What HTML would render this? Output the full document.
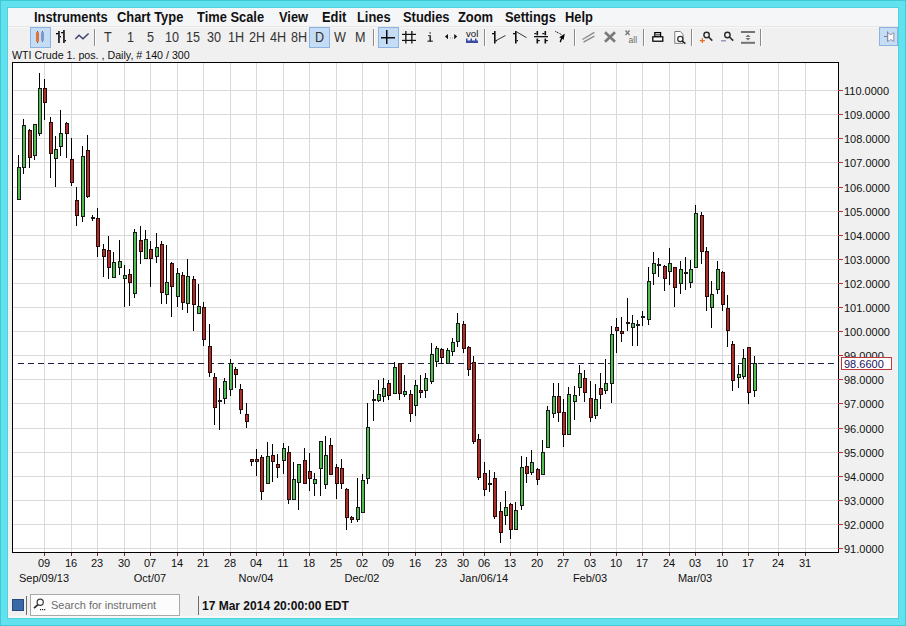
<!DOCTYPE html><html><head><meta charset="utf-8"><style>
*{margin:0;padding:0;box-sizing:border-box}
html,body{width:906px;height:626px;overflow:hidden;background:#62e2ee;font-family:"Liberation Sans",sans-serif}
.a{position:absolute}
.win{position:absolute;left:8px;top:8px;width:890px;height:610px;background:#f0f0f0}
.m{position:absolute;top:9px;font:bold 14px "Liberation Sans",sans-serif;color:#111;white-space:nowrap;transform:scaleX(0.92);transform-origin:0 0}
.tb{position:absolute;top:29px;font:14px "Liberation Sans",sans-serif;color:#333;white-space:nowrap;transform:scaleX(0.9);transform-origin:0 0}
.sel{position:absolute;background:#c5dcf5;border:1px solid #8db3e2}
.sep{position:absolute;width:1px;top:29px;height:17px;background:#8a8a8a;box-shadow:1px 0 0 #fff}
.pl{position:absolute;left:844px;font:11px "Liberation Sans",sans-serif;color:#111;white-space:nowrap}
.dl{position:absolute;top:557px;font:11px "Liberation Sans",sans-serif;color:#111;white-space:nowrap;width:30px;text-align:center}
.ml{position:absolute;top:572px;font:11px "Liberation Sans",sans-serif;color:#111;white-space:nowrap}
</style></head><body>

<div class="a" style="left:0;top:0;width:906px;height:626px;border:1px solid #3fc9d6"></div>
<div class="a" style="left:7px;top:7px;width:892px;height:612px;border:1px solid #4fd2de"></div>
<div class="win"></div>
<div class="a" style="left:8px;top:8px;width:890px;height:18px;background:#f5f6f8"></div>
<div class="a" style="left:8px;top:26px;width:890px;height:1px;background:#e8e8e8"></div>
<div class="a" style="left:8px;top:27px;width:890px;height:1px;background:#f7f7f7"></div>
<div class="m" style="left:33.5px">Instruments</div>
<div class="m" style="left:117px">Chart Type</div>
<div class="m" style="left:196.5px">Time Scale</div>
<div class="m" style="left:279px">View</div>
<div class="m" style="left:321.5px">Edit</div>
<div class="m" style="left:357px">Lines</div>
<div class="m" style="left:402.5px">Studies</div>
<div class="m" style="left:458px">Zoom</div>
<div class="m" style="left:504.5px">Settings</div>
<div class="m" style="left:564.5px">Help</div>
<div class="sel" style="left:30px;top:27px;width:21px;height:21px"></div>
<div class="sel" style="left:309px;top:27px;width:21px;height:21px"></div>
<div class="sel" style="left:378px;top:27px;width:21px;height:21px"></div>
<div class="sel" style="left:879px;top:27px;width:19px;height:19px"></div>
<div class="sep" style="left:94px"></div>
<div class="sep" style="left:373px"></div>
<div class="sep" style="left:484px"></div>
<div class="sep" style="left:574px"></div>
<div class="sep" style="left:643px"></div>
<div class="sep" style="left:691px"></div>
<div class="sep" style="left:760px"></div>
<div class="tb" style="left:104px">T</div>
<div class="tb" style="left:126.5px">1</div>
<div class="tb" style="left:146.5px">5</div>
<div class="tb" style="left:164.5px">10</div>
<div class="tb" style="left:185.5px">15</div>
<div class="tb" style="left:206.5px">30</div>
<div class="tb" style="left:228px">1H</div>
<div class="tb" style="left:248.5px">2H</div>
<div class="tb" style="left:269.5px">4H</div>
<div class="tb" style="left:290.5px">8H</div>
<div class="tb" style="left:315px">D</div>
<div class="tb" style="left:334px">W</div>
<div class="tb" style="left:355px">M</div>
<svg class="a" style="left:0;top:0" width="906" height="60">
<rect x="37" y="31" width="1" height="12" fill="#8a4a20"/><rect x="36" y="32" width="3" height="10" rx="1" fill="#e07436"/>
<rect x="42" y="31" width="1" height="11" fill="#4a6aa0"/><rect x="41" y="32" width="3" height="9" rx="1" fill="#7b9ad0"/>
<g fill="#000"><rect x="58.2" y="31" width="1.5" height="12"/><rect x="56" y="33" width="2.2" height="1.3"/><rect x="59.7" y="36" width="1.3" height="1.3"/><rect x="63.2" y="30" width="1.5" height="13"/><rect x="61.2" y="32" width="2" height="1.3"/><rect x="64.7" y="40" width="1.3" height="1.3"/></g>
<polyline points="75.3,39 79,35.3 83,38.8 88.6,33.4" fill="none" stroke="#3a3e6a" stroke-width="1.4"/>
<rect x="381" y="37" width="14" height="1.5" fill="#111"/><rect x="386" y="30" width="1.5" height="14" fill="#111"/>
<g fill="#111"><rect x="405.2" y="31" width="1.3" height="12.5"/><rect x="411.2" y="31" width="1.3" height="12.5"/><rect x="402" y="33.8" width="14" height="1.2"/><rect x="402" y="39.8" width="14" height="1.2"/></g>
<g fill="#1a1a1a"><rect x="429.4" y="32.2" width="1.5" height="1.5" fill="#555"/><rect x="429.5" y="35.2" width="1.4" height="6.2"/><rect x="428" y="35.2" width="1.5" height="1"/><rect x="427.5" y="40.6" width="5.3" height="1.1"/></g>
<path d="M445,36.5 L448,34 L448,39.2 Z M457.2,36.5 L454.2,34 L454.2,39.2 Z" fill="#111"/><rect x="450" y="37.5" width="1" height="1" fill="#999"/><rect x="452" y="37.5" width="1" height="1" fill="#999"/>
<text x="466" y="36.9" font-family="Liberation Sans" font-size="9" fill="#111" textLength="12.3" lengthAdjust="spacingAndGlyphs">vol</text>
<path d="M466,38.5 h1.5 v2 h3 v-2 h1.5 v2 h3 v-2 h1.5 v2 h1.5 v2.5 h-12 z" fill="#3b4ba3"/>
<g fill="#111"><rect x="494" y="31" width="1.6" height="12.5"/><rect x="492" y="33" width="2" height="1.3"/><rect x="495.5" y="40" width="1.5" height="1.3"/><rect x="515" y="31" width="1.6" height="12.5"/><rect x="513" y="33" width="2" height="1.3"/><rect x="516.5" y="40" width="1.5" height="1.3"/></g>
<line x1="496.5" y1="40.3" x2="505.5" y2="35.5" stroke="#333" stroke-width="1"/><line x1="516.5" y1="31.8" x2="526.6" y2="37.7" stroke="#333" stroke-width="1"/>
<g fill="#111"><rect x="534" y="36" width="14" height="1.3"/><rect x="536.5" y="31" width="1.6" height="4.3"/><rect x="544.5" y="31" width="1.6" height="4.3"/><rect x="536.5" y="38.5" width="1.6" height="5"/><rect x="544.5" y="38.5" width="1.6" height="5"/><rect x="534.3" y="33" width="2.2" height="1.2"/><rect x="542.3" y="33" width="2.2" height="1.2"/><rect x="538" y="40" width="1.8" height="1.2"/><rect x="546" y="40" width="1.8" height="1.2"/></g>
<line x1="555.3" y1="31.3" x2="562" y2="34.8" stroke="#222" stroke-width="1" stroke-dasharray="1.2 0.6"/><path d="M564.8,33.8 L563.5,40 L562.2,38.8 L560.8,42.5 L559.6,41.8 L561,38 L559.2,37.2 Z" fill="#000"/>
<g stroke="#8a8a8a" stroke-width="1.4" fill="none"><line x1="582.4" y1="39.5" x2="594.4" y2="32.4"/><line x1="583.5" y1="42.1" x2="594.4" y2="36.2"/></g>
<g stroke="#7a7a7a" stroke-width="2.6"><line x1="605" y1="32.2" x2="615" y2="41.8"/><line x1="615" y1="32.2" x2="605" y2="41.8"/></g>
<g stroke="#777" stroke-width="1.3"><line x1="625.5" y1="30.5" x2="629.5" y2="35"/><line x1="629.5" y1="30.5" x2="625.5" y2="35"/></g>
<text x="628.6" y="42.6" font-family="Liberation Sans" font-size="9" fill="#6a6a6a" textLength="8.6" lengthAdjust="spacingAndGlyphs">all</text>
<g fill="#fff" stroke="#000" stroke-width="1.25"><rect x="654.8" y="32.6" width="5.8" height="4.4"/><rect x="652.8" y="36.8" width="10" height="4.4"/></g><rect x="655.4" y="34.4" width="4.6" height="1" fill="#111"/><rect x="654" y="38.2" width="7.6" height="1.4" fill="#fff"/>
<path d="M674.8,31.5 h5.6 l2.6,2.8 v9 h-8.2 z" fill="#fff" stroke="#7a7a7a" stroke-width="1"/><circle cx="680.3" cy="39" r="2.6" fill="#fff" stroke="#333" stroke-width="1.3"/><line x1="682.2" y1="41" x2="685.4" y2="43.6" stroke="#222" stroke-width="1.5"/>
<circle cx="706.6" cy="35" r="2.7" fill="none" stroke="#2a2a2a" stroke-width="1.4"/><line x1="708.6" y1="37" x2="712.3" y2="40.6" stroke="#2a2a2a" stroke-width="1.6"/>
<g fill="#e0702a"><rect x="699.8" y="40" width="5" height="1.3"/><rect x="701.7" y="38" width="1.3" height="5"/></g>
<circle cx="727.4" cy="35" r="2.7" fill="none" stroke="#2a2a2a" stroke-width="1.4"/><line x1="729.4" y1="37" x2="733.2" y2="40.6" stroke="#2a2a2a" stroke-width="1.6"/>
<rect x="721" y="40.2" width="5" height="1.2" fill="#7d86b4"/>
<g fill="#737373"><rect x="741" y="31" width="14" height="2"/><rect x="741" y="41.8" width="14" height="2"/><path d="M748,34.5 L750.6,37 L745.4,37 Z M748,40.5 L750.6,38 L745.4,38 Z"/></g>
<rect x="884" y="36" width="3.5" height="1" fill="#6a7a9a"/><rect x="887" y="31.5" width="1" height="10" fill="#6a7a9a"/><path d="M887.8,32.8 L890.8,34.8 L893.8,32.8 L893.8,41.5 L890.8,39.5 L887.8,41.5 Z" fill="#fff" stroke="#8a8a9a" stroke-width="0.9"/>
</svg>
<div class="a" style="left:12px;top:49px;font:11px 'Liberation Sans',sans-serif;color:#111;white-space:nowrap;transform:scaleX(0.97);transform-origin:0 0">WTI Crude 1. pos. , Daily, # 140 / 300</div>
<div class="a" style="left:12px;top:62px;width:827px;height:491px;background:#fff;border:1px solid #000"></div>
<svg class="a" style="left:0;top:0" width="906" height="626" shape-rendering="crispEdges">
<rect x="13" y="548" width="825" height="1" fill="#dadada"/>
<rect x="838" y="548" width="5" height="1" fill="#b83535"/>
<rect x="13" y="524" width="825" height="1" fill="#dadada"/>
<rect x="838" y="524" width="5" height="1" fill="#b83535"/>
<rect x="13" y="500" width="825" height="1" fill="#dadada"/>
<rect x="838" y="500" width="5" height="1" fill="#b83535"/>
<rect x="13" y="476" width="825" height="1" fill="#dadada"/>
<rect x="838" y="476" width="5" height="1" fill="#b83535"/>
<rect x="13" y="452" width="825" height="1" fill="#dadada"/>
<rect x="838" y="452" width="5" height="1" fill="#b83535"/>
<rect x="13" y="428" width="825" height="1" fill="#dadada"/>
<rect x="838" y="428" width="5" height="1" fill="#b83535"/>
<rect x="13" y="403" width="825" height="1" fill="#dadada"/>
<rect x="838" y="403" width="5" height="1" fill="#b83535"/>
<rect x="13" y="379" width="825" height="1" fill="#dadada"/>
<rect x="838" y="379" width="5" height="1" fill="#b83535"/>
<rect x="13" y="355" width="825" height="1" fill="#dadada"/>
<rect x="838" y="355" width="5" height="1" fill="#b83535"/>
<rect x="13" y="331" width="825" height="1" fill="#dadada"/>
<rect x="838" y="331" width="5" height="1" fill="#b83535"/>
<rect x="13" y="307" width="825" height="1" fill="#dadada"/>
<rect x="838" y="307" width="5" height="1" fill="#b83535"/>
<rect x="13" y="283" width="825" height="1" fill="#dadada"/>
<rect x="838" y="283" width="5" height="1" fill="#b83535"/>
<rect x="13" y="259" width="825" height="1" fill="#dadada"/>
<rect x="838" y="259" width="5" height="1" fill="#b83535"/>
<rect x="13" y="235" width="825" height="1" fill="#dadada"/>
<rect x="838" y="235" width="5" height="1" fill="#b83535"/>
<rect x="13" y="211" width="825" height="1" fill="#dadada"/>
<rect x="838" y="211" width="5" height="1" fill="#b83535"/>
<rect x="13" y="187" width="825" height="1" fill="#dadada"/>
<rect x="838" y="187" width="5" height="1" fill="#b83535"/>
<rect x="13" y="162" width="825" height="1" fill="#dadada"/>
<rect x="838" y="162" width="5" height="1" fill="#b83535"/>
<rect x="13" y="138" width="825" height="1" fill="#dadada"/>
<rect x="838" y="138" width="5" height="1" fill="#b83535"/>
<rect x="13" y="114" width="825" height="1" fill="#dadada"/>
<rect x="838" y="114" width="5" height="1" fill="#b83535"/>
<rect x="13" y="90" width="825" height="1" fill="#dadada"/>
<rect x="838" y="90" width="5" height="1" fill="#b83535"/>
<rect x="44" y="63" width="1" height="489" fill="#dadada"/>
<rect x="44" y="553" width="1" height="3" fill="#6a3030"/>
<rect x="71" y="63" width="1" height="489" fill="#dadada"/>
<rect x="71" y="553" width="1" height="3" fill="#6a3030"/>
<rect x="97" y="63" width="1" height="489" fill="#dadada"/>
<rect x="97" y="553" width="1" height="3" fill="#6a3030"/>
<rect x="124" y="63" width="1" height="489" fill="#dadada"/>
<rect x="124" y="553" width="1" height="3" fill="#6a3030"/>
<rect x="150" y="63" width="1" height="489" fill="#dadada"/>
<rect x="150" y="553" width="1" height="3" fill="#6a3030"/>
<rect x="177" y="63" width="1" height="489" fill="#dadada"/>
<rect x="177" y="553" width="1" height="3" fill="#6a3030"/>
<rect x="203" y="63" width="1" height="489" fill="#dadada"/>
<rect x="203" y="553" width="1" height="3" fill="#6a3030"/>
<rect x="230" y="63" width="1" height="489" fill="#dadada"/>
<rect x="230" y="553" width="1" height="3" fill="#6a3030"/>
<rect x="256" y="63" width="1" height="489" fill="#dadada"/>
<rect x="256" y="553" width="1" height="3" fill="#6a3030"/>
<rect x="283" y="63" width="1" height="489" fill="#dadada"/>
<rect x="283" y="553" width="1" height="3" fill="#6a3030"/>
<rect x="309" y="63" width="1" height="489" fill="#dadada"/>
<rect x="309" y="553" width="1" height="3" fill="#6a3030"/>
<rect x="336" y="63" width="1" height="489" fill="#dadada"/>
<rect x="336" y="553" width="1" height="3" fill="#6a3030"/>
<rect x="362" y="63" width="1" height="489" fill="#dadada"/>
<rect x="362" y="553" width="1" height="3" fill="#6a3030"/>
<rect x="388" y="63" width="1" height="489" fill="#dadada"/>
<rect x="388" y="553" width="1" height="3" fill="#6a3030"/>
<rect x="415" y="63" width="1" height="489" fill="#dadada"/>
<rect x="415" y="553" width="1" height="3" fill="#6a3030"/>
<rect x="441" y="63" width="1" height="489" fill="#dadada"/>
<rect x="441" y="553" width="1" height="3" fill="#6a3030"/>
<rect x="463" y="63" width="1" height="489" fill="#dadada"/>
<rect x="463" y="553" width="1" height="3" fill="#6a3030"/>
<rect x="484" y="63" width="1" height="489" fill="#dadada"/>
<rect x="484" y="553" width="1" height="3" fill="#6a3030"/>
<rect x="510" y="63" width="1" height="489" fill="#dadada"/>
<rect x="510" y="553" width="1" height="3" fill="#6a3030"/>
<rect x="537" y="63" width="1" height="489" fill="#dadada"/>
<rect x="537" y="553" width="1" height="3" fill="#6a3030"/>
<rect x="563" y="63" width="1" height="489" fill="#dadada"/>
<rect x="563" y="553" width="1" height="3" fill="#6a3030"/>
<rect x="590" y="63" width="1" height="489" fill="#dadada"/>
<rect x="590" y="553" width="1" height="3" fill="#6a3030"/>
<rect x="616" y="63" width="1" height="489" fill="#dadada"/>
<rect x="616" y="553" width="1" height="3" fill="#6a3030"/>
<rect x="642" y="63" width="1" height="489" fill="#dadada"/>
<rect x="642" y="553" width="1" height="3" fill="#6a3030"/>
<rect x="669" y="63" width="1" height="489" fill="#dadada"/>
<rect x="669" y="553" width="1" height="3" fill="#6a3030"/>
<rect x="695" y="63" width="1" height="489" fill="#dadada"/>
<rect x="695" y="553" width="1" height="3" fill="#6a3030"/>
<rect x="722" y="63" width="1" height="489" fill="#dadada"/>
<rect x="722" y="553" width="1" height="3" fill="#6a3030"/>
<rect x="748" y="63" width="1" height="489" fill="#dadada"/>
<rect x="748" y="553" width="1" height="3" fill="#6a3030"/>
<rect x="778" y="63" width="1" height="489" fill="#dadada"/>
<rect x="778" y="553" width="1" height="3" fill="#6a3030"/>
<rect x="805" y="63" width="1" height="489" fill="#dadada"/>
<rect x="805" y="553" width="1" height="3" fill="#6a3030"/>
<line x1="18" y1="363.5" x2="838" y2="363.5" stroke="#1c1c48" stroke-width="1" stroke-dasharray="6 4"/>
<rect x="18" y="155" width="1" height="45" fill="#000"/>
<rect x="17" y="167" width="4" height="33" fill="#1a1a1a"/>
<rect x="18" y="168" width="2" height="31" fill="#4fbd4f"/>
<rect x="23" y="119" width="1" height="55" fill="#000"/>
<rect x="22" y="125" width="4" height="43" fill="#1a1a1a"/>
<rect x="23" y="126" width="2" height="41" fill="#4fbd4f"/>
<rect x="29" y="129" width="1" height="39" fill="#000"/>
<rect x="28" y="130" width="4" height="28" fill="#2a0a0a"/>
<rect x="29" y="131" width="2" height="26" fill="#a8302a"/>
<rect x="34" y="124" width="1" height="36" fill="#000"/>
<rect x="33" y="124" width="4" height="32" fill="#1a1a1a"/>
<rect x="34" y="125" width="2" height="30" fill="#4fbd4f"/>
<rect x="39" y="73" width="1" height="63" fill="#000"/>
<rect x="38" y="88" width="4" height="46" fill="#1a1a1a"/>
<rect x="39" y="89" width="2" height="44" fill="#4fbd4f"/>
<rect x="44" y="79" width="1" height="41" fill="#000"/>
<rect x="43" y="88" width="4" height="15" fill="#2a0a0a"/>
<rect x="44" y="89" width="2" height="13" fill="#a8302a"/>
<rect x="50" y="117" width="1" height="61" fill="#000"/>
<rect x="49" y="122" width="4" height="32" fill="#2a0a0a"/>
<rect x="50" y="123" width="2" height="30" fill="#a8302a"/>
<rect x="55" y="136" width="1" height="51" fill="#000"/>
<rect x="54" y="149" width="4" height="10" fill="#1a1a1a"/>
<rect x="55" y="150" width="2" height="8" fill="#4fbd4f"/>
<rect x="60" y="110" width="1" height="46" fill="#000"/>
<rect x="59" y="133" width="4" height="14" fill="#1a1a1a"/>
<rect x="60" y="134" width="2" height="12" fill="#4fbd4f"/>
<rect x="66" y="122" width="1" height="36" fill="#000"/>
<rect x="65" y="123" width="4" height="11" fill="#2a0a0a"/>
<rect x="66" y="124" width="2" height="9" fill="#a8302a"/>
<rect x="71" y="138" width="1" height="48" fill="#000"/>
<rect x="70" y="159" width="4" height="24" fill="#2a0a0a"/>
<rect x="71" y="160" width="2" height="22" fill="#a8302a"/>
<rect x="76" y="187" width="1" height="39" fill="#000"/>
<rect x="75" y="200" width="4" height="16" fill="#2a0a0a"/>
<rect x="76" y="201" width="2" height="14" fill="#a8302a"/>
<rect x="82" y="146" width="1" height="76" fill="#000"/>
<rect x="81" y="156" width="4" height="61" fill="#1a1a1a"/>
<rect x="82" y="157" width="2" height="59" fill="#4fbd4f"/>
<rect x="87" y="135" width="1" height="63" fill="#000"/>
<rect x="86" y="150" width="4" height="47" fill="#2a0a0a"/>
<rect x="87" y="151" width="2" height="45" fill="#a8302a"/>
<rect x="92" y="215" width="1" height="6" fill="#000"/>
<rect x="91" y="217" width="4" height="2" fill="#1a1a1a"/>
<rect x="97" y="208" width="1" height="49" fill="#000"/>
<rect x="96" y="218" width="4" height="29" fill="#2a0a0a"/>
<rect x="97" y="219" width="2" height="27" fill="#a8302a"/>
<rect x="103" y="244" width="1" height="33" fill="#000"/>
<rect x="102" y="249" width="4" height="8" fill="#2a0a0a"/>
<rect x="103" y="250" width="2" height="6" fill="#a8302a"/>
<rect x="108" y="236" width="1" height="43" fill="#000"/>
<rect x="107" y="250" width="4" height="18" fill="#2a0a0a"/>
<rect x="108" y="251" width="2" height="16" fill="#a8302a"/>
<rect x="113" y="252" width="1" height="26" fill="#000"/>
<rect x="112" y="262" width="4" height="16" fill="#1a1a1a"/>
<rect x="113" y="263" width="2" height="14" fill="#4fbd4f"/>
<rect x="119" y="240" width="1" height="35" fill="#000"/>
<rect x="118" y="261" width="4" height="7" fill="#1a1a1a"/>
<rect x="119" y="262" width="2" height="5" fill="#4fbd4f"/>
<rect x="124" y="265" width="1" height="42" fill="#000"/>
<rect x="123" y="275" width="4" height="4" fill="#1a1a1a"/>
<rect x="124" y="276" width="2" height="2" fill="#4fbd4f"/>
<rect x="129" y="269" width="1" height="37" fill="#000"/>
<rect x="128" y="274" width="4" height="9" fill="#2a0a0a"/>
<rect x="129" y="275" width="2" height="7" fill="#a8302a"/>
<rect x="134" y="229" width="1" height="69" fill="#000"/>
<rect x="133" y="232" width="4" height="62" fill="#1a1a1a"/>
<rect x="134" y="233" width="2" height="60" fill="#4fbd4f"/>
<rect x="140" y="226" width="1" height="38" fill="#000"/>
<rect x="139" y="240" width="4" height="12" fill="#2a0a0a"/>
<rect x="140" y="241" width="2" height="10" fill="#a8302a"/>
<rect x="145" y="230" width="1" height="29" fill="#000"/>
<rect x="144" y="239" width="4" height="20" fill="#1a1a1a"/>
<rect x="145" y="240" width="2" height="18" fill="#4fbd4f"/>
<rect x="150" y="241" width="1" height="46" fill="#000"/>
<rect x="149" y="249" width="4" height="10" fill="#2a0a0a"/>
<rect x="150" y="250" width="2" height="8" fill="#a8302a"/>
<rect x="156" y="233" width="1" height="30" fill="#000"/>
<rect x="155" y="247" width="4" height="10" fill="#1a1a1a"/>
<rect x="156" y="248" width="2" height="8" fill="#4fbd4f"/>
<rect x="161" y="241" width="1" height="63" fill="#000"/>
<rect x="160" y="244" width="4" height="49" fill="#2a0a0a"/>
<rect x="161" y="245" width="2" height="47" fill="#a8302a"/>
<rect x="166" y="245" width="1" height="59" fill="#000"/>
<rect x="165" y="282" width="4" height="13" fill="#1a1a1a"/>
<rect x="166" y="283" width="2" height="11" fill="#4fbd4f"/>
<rect x="171" y="262" width="1" height="55" fill="#000"/>
<rect x="170" y="263" width="4" height="24" fill="#2a0a0a"/>
<rect x="171" y="264" width="2" height="22" fill="#a8302a"/>
<rect x="177" y="268" width="1" height="39" fill="#000"/>
<rect x="176" y="273" width="4" height="24" fill="#1a1a1a"/>
<rect x="177" y="274" width="2" height="22" fill="#4fbd4f"/>
<rect x="182" y="272" width="1" height="38" fill="#000"/>
<rect x="181" y="275" width="4" height="28" fill="#2a0a0a"/>
<rect x="182" y="276" width="2" height="26" fill="#a8302a"/>
<rect x="187" y="259" width="1" height="54" fill="#000"/>
<rect x="186" y="276" width="4" height="28" fill="#1a1a1a"/>
<rect x="187" y="277" width="2" height="26" fill="#4fbd4f"/>
<rect x="193" y="276" width="1" height="55" fill="#000"/>
<rect x="192" y="279" width="4" height="26" fill="#2a0a0a"/>
<rect x="193" y="280" width="2" height="24" fill="#a8302a"/>
<rect x="198" y="284" width="1" height="30" fill="#000"/>
<rect x="197" y="306" width="4" height="8" fill="#1a1a1a"/>
<rect x="198" y="307" width="2" height="6" fill="#4fbd4f"/>
<rect x="203" y="302" width="1" height="44" fill="#000"/>
<rect x="202" y="307" width="4" height="33" fill="#2a0a0a"/>
<rect x="203" y="308" width="2" height="31" fill="#a8302a"/>
<rect x="209" y="324" width="1" height="53" fill="#000"/>
<rect x="208" y="346" width="4" height="27" fill="#2a0a0a"/>
<rect x="209" y="347" width="2" height="25" fill="#a8302a"/>
<rect x="214" y="373" width="1" height="52" fill="#000"/>
<rect x="213" y="377" width="4" height="31" fill="#2a0a0a"/>
<rect x="214" y="378" width="2" height="29" fill="#a8302a"/>
<rect x="219" y="388" width="1" height="42" fill="#000"/>
<rect x="218" y="400" width="4" height="2" fill="#1a1a1a"/>
<rect x="224" y="378" width="1" height="26" fill="#000"/>
<rect x="223" y="381" width="4" height="18" fill="#1a1a1a"/>
<rect x="224" y="382" width="2" height="16" fill="#4fbd4f"/>
<rect x="230" y="359" width="1" height="37" fill="#000"/>
<rect x="229" y="363" width="4" height="27" fill="#1a1a1a"/>
<rect x="230" y="364" width="2" height="25" fill="#4fbd4f"/>
<rect x="235" y="367" width="1" height="21" fill="#000"/>
<rect x="234" y="369" width="4" height="6" fill="#2a0a0a"/>
<rect x="235" y="370" width="2" height="4" fill="#a8302a"/>
<rect x="240" y="384" width="1" height="30" fill="#000"/>
<rect x="239" y="389" width="4" height="21" fill="#2a0a0a"/>
<rect x="240" y="390" width="2" height="19" fill="#a8302a"/>
<rect x="246" y="403" width="1" height="25" fill="#000"/>
<rect x="245" y="414" width="4" height="8" fill="#2a0a0a"/>
<rect x="246" y="415" width="2" height="6" fill="#a8302a"/>
<rect x="251" y="459" width="1" height="7" fill="#000"/>
<rect x="250" y="459" width="4" height="3" fill="#2a0a0a"/>
<rect x="251" y="460" width="2" height="1" fill="#a8302a"/>
<rect x="256" y="449" width="1" height="27" fill="#000"/>
<rect x="255" y="459" width="4" height="3" fill="#1a1a1a"/>
<rect x="256" y="460" width="2" height="1" fill="#a8302a"/>
<rect x="261" y="455" width="1" height="45" fill="#000"/>
<rect x="260" y="457" width="4" height="35" fill="#2a0a0a"/>
<rect x="261" y="458" width="2" height="33" fill="#a8302a"/>
<rect x="267" y="442" width="1" height="42" fill="#000"/>
<rect x="266" y="456" width="4" height="28" fill="#1a1a1a"/>
<rect x="267" y="457" width="2" height="26" fill="#4fbd4f"/>
<rect x="272" y="444" width="1" height="38" fill="#000"/>
<rect x="271" y="455" width="4" height="7" fill="#2a0a0a"/>
<rect x="272" y="456" width="2" height="5" fill="#a8302a"/>
<rect x="277" y="454" width="1" height="24" fill="#000"/>
<rect x="276" y="464" width="4" height="4" fill="#2a0a0a"/>
<rect x="277" y="465" width="2" height="2" fill="#a8302a"/>
<rect x="283" y="443" width="1" height="31" fill="#000"/>
<rect x="282" y="448" width="4" height="13" fill="#1a1a1a"/>
<rect x="283" y="449" width="2" height="11" fill="#4fbd4f"/>
<rect x="288" y="446" width="1" height="58" fill="#000"/>
<rect x="287" y="452" width="4" height="48" fill="#2a0a0a"/>
<rect x="288" y="453" width="2" height="46" fill="#a8302a"/>
<rect x="293" y="462" width="1" height="38" fill="#000"/>
<rect x="292" y="479" width="4" height="21" fill="#1a1a1a"/>
<rect x="293" y="480" width="2" height="19" fill="#4fbd4f"/>
<rect x="298" y="464" width="1" height="46" fill="#000"/>
<rect x="297" y="464" width="4" height="19" fill="#1a1a1a"/>
<rect x="298" y="465" width="2" height="17" fill="#4fbd4f"/>
<rect x="304" y="448" width="1" height="36" fill="#000"/>
<rect x="303" y="460" width="4" height="24" fill="#2a0a0a"/>
<rect x="304" y="461" width="2" height="22" fill="#a8302a"/>
<rect x="309" y="453" width="1" height="38" fill="#000"/>
<rect x="308" y="471" width="4" height="8" fill="#2a0a0a"/>
<rect x="309" y="472" width="2" height="6" fill="#a8302a"/>
<rect x="314" y="473" width="1" height="23" fill="#000"/>
<rect x="313" y="479" width="4" height="5" fill="#1a1a1a"/>
<rect x="314" y="480" width="2" height="3" fill="#4fbd4f"/>
<rect x="320" y="441" width="1" height="55" fill="#000"/>
<rect x="319" y="441" width="4" height="28" fill="#1a1a1a"/>
<rect x="320" y="442" width="2" height="26" fill="#4fbd4f"/>
<rect x="325" y="436" width="1" height="53" fill="#000"/>
<rect x="324" y="455" width="4" height="30" fill="#1a1a1a"/>
<rect x="325" y="456" width="2" height="28" fill="#4fbd4f"/>
<rect x="330" y="438" width="1" height="37" fill="#000"/>
<rect x="329" y="445" width="4" height="30" fill="#2a0a0a"/>
<rect x="330" y="446" width="2" height="28" fill="#a8302a"/>
<rect x="336" y="464" width="1" height="35" fill="#000"/>
<rect x="335" y="467" width="4" height="17" fill="#2a0a0a"/>
<rect x="336" y="468" width="2" height="15" fill="#a8302a"/>
<rect x="341" y="459" width="1" height="30" fill="#000"/>
<rect x="340" y="468" width="4" height="16" fill="#2a0a0a"/>
<rect x="341" y="469" width="2" height="14" fill="#a8302a"/>
<rect x="346" y="488" width="1" height="42" fill="#000"/>
<rect x="345" y="489" width="4" height="29" fill="#2a0a0a"/>
<rect x="346" y="490" width="2" height="27" fill="#a8302a"/>
<rect x="351" y="516" width="1" height="7" fill="#000"/>
<rect x="350" y="517" width="4" height="3" fill="#2a0a0a"/>
<rect x="351" y="518" width="2" height="1" fill="#a8302a"/>
<rect x="357" y="478" width="1" height="44" fill="#000"/>
<rect x="356" y="507" width="4" height="13" fill="#1a1a1a"/>
<rect x="357" y="508" width="2" height="11" fill="#4fbd4f"/>
<rect x="362" y="474" width="1" height="39" fill="#000"/>
<rect x="361" y="480" width="4" height="33" fill="#1a1a1a"/>
<rect x="362" y="481" width="2" height="31" fill="#4fbd4f"/>
<rect x="367" y="403" width="1" height="81" fill="#000"/>
<rect x="366" y="427" width="4" height="52" fill="#1a1a1a"/>
<rect x="367" y="428" width="2" height="50" fill="#4fbd4f"/>
<rect x="373" y="390" width="1" height="31" fill="#000"/>
<rect x="372" y="399" width="4" height="2" fill="#1a1a1a"/>
<rect x="378" y="380" width="1" height="22" fill="#000"/>
<rect x="377" y="394" width="4" height="7" fill="#1a1a1a"/>
<rect x="378" y="395" width="2" height="5" fill="#4fbd4f"/>
<rect x="383" y="378" width="1" height="24" fill="#000"/>
<rect x="382" y="388" width="4" height="9" fill="#1a1a1a"/>
<rect x="383" y="389" width="2" height="7" fill="#4fbd4f"/>
<rect x="388" y="380" width="1" height="20" fill="#000"/>
<rect x="387" y="383" width="4" height="13" fill="#2a0a0a"/>
<rect x="388" y="384" width="2" height="11" fill="#a8302a"/>
<rect x="394" y="362" width="1" height="32" fill="#000"/>
<rect x="393" y="367" width="4" height="27" fill="#1a1a1a"/>
<rect x="394" y="368" width="2" height="25" fill="#4fbd4f"/>
<rect x="399" y="363" width="1" height="37" fill="#000"/>
<rect x="398" y="363" width="4" height="31" fill="#2a0a0a"/>
<rect x="399" y="364" width="2" height="29" fill="#a8302a"/>
<rect x="404" y="375" width="1" height="22" fill="#000"/>
<rect x="403" y="391" width="4" height="4" fill="#1a1a1a"/>
<rect x="404" y="392" width="2" height="2" fill="#4fbd4f"/>
<rect x="410" y="390" width="1" height="32" fill="#000"/>
<rect x="409" y="394" width="4" height="20" fill="#2a0a0a"/>
<rect x="410" y="395" width="2" height="18" fill="#a8302a"/>
<rect x="415" y="380" width="1" height="36" fill="#000"/>
<rect x="414" y="385" width="4" height="21" fill="#1a1a1a"/>
<rect x="415" y="386" width="2" height="19" fill="#4fbd4f"/>
<rect x="420" y="375" width="1" height="23" fill="#000"/>
<rect x="419" y="390" width="4" height="3" fill="#2a0a0a"/>
<rect x="420" y="391" width="2" height="1" fill="#a8302a"/>
<rect x="425" y="373" width="1" height="25" fill="#000"/>
<rect x="424" y="378" width="4" height="13" fill="#1a1a1a"/>
<rect x="425" y="379" width="2" height="11" fill="#4fbd4f"/>
<rect x="431" y="343" width="1" height="41" fill="#000"/>
<rect x="430" y="354" width="4" height="28" fill="#1a1a1a"/>
<rect x="431" y="355" width="2" height="26" fill="#4fbd4f"/>
<rect x="436" y="346" width="1" height="21" fill="#000"/>
<rect x="435" y="348" width="4" height="14" fill="#1a1a1a"/>
<rect x="436" y="349" width="2" height="12" fill="#4fbd4f"/>
<rect x="441" y="348" width="1" height="16" fill="#000"/>
<rect x="440" y="349" width="4" height="9" fill="#2a0a0a"/>
<rect x="441" y="350" width="2" height="7" fill="#a8302a"/>
<rect x="447" y="348" width="1" height="16" fill="#000"/>
<rect x="446" y="350" width="4" height="14" fill="#1a1a1a"/>
<rect x="447" y="351" width="2" height="12" fill="#4fbd4f"/>
<rect x="452" y="338" width="1" height="18" fill="#000"/>
<rect x="451" y="342" width="4" height="10" fill="#1a1a1a"/>
<rect x="452" y="343" width="2" height="8" fill="#4fbd4f"/>
<rect x="457" y="313" width="1" height="34" fill="#000"/>
<rect x="456" y="323" width="4" height="19" fill="#1a1a1a"/>
<rect x="457" y="324" width="2" height="17" fill="#4fbd4f"/>
<rect x="463" y="321" width="1" height="32" fill="#000"/>
<rect x="462" y="324" width="4" height="25" fill="#2a0a0a"/>
<rect x="463" y="325" width="2" height="23" fill="#a8302a"/>
<rect x="468" y="346" width="1" height="30" fill="#000"/>
<rect x="467" y="347" width="4" height="23" fill="#2a0a0a"/>
<rect x="468" y="348" width="2" height="21" fill="#a8302a"/>
<rect x="473" y="356" width="1" height="88" fill="#000"/>
<rect x="472" y="362" width="4" height="80" fill="#2a0a0a"/>
<rect x="473" y="363" width="2" height="78" fill="#a8302a"/>
<rect x="478" y="434" width="1" height="46" fill="#000"/>
<rect x="477" y="439" width="4" height="39" fill="#2a0a0a"/>
<rect x="478" y="440" width="2" height="37" fill="#a8302a"/>
<rect x="484" y="462" width="1" height="34" fill="#000"/>
<rect x="483" y="473" width="4" height="17" fill="#2a0a0a"/>
<rect x="484" y="474" width="2" height="15" fill="#a8302a"/>
<rect x="489" y="470" width="1" height="22" fill="#000"/>
<rect x="488" y="483" width="4" height="2" fill="#1a1a1a"/>
<rect x="494" y="472" width="1" height="47" fill="#000"/>
<rect x="493" y="478" width="4" height="39" fill="#2a0a0a"/>
<rect x="494" y="479" width="2" height="37" fill="#a8302a"/>
<rect x="500" y="502" width="1" height="41" fill="#000"/>
<rect x="499" y="511" width="4" height="22" fill="#2a0a0a"/>
<rect x="500" y="512" width="2" height="20" fill="#a8302a"/>
<rect x="505" y="491" width="1" height="34" fill="#000"/>
<rect x="504" y="507" width="4" height="9" fill="#1a1a1a"/>
<rect x="505" y="508" width="2" height="7" fill="#4fbd4f"/>
<rect x="510" y="503" width="1" height="36" fill="#000"/>
<rect x="509" y="504" width="4" height="26" fill="#2a0a0a"/>
<rect x="510" y="505" width="2" height="24" fill="#a8302a"/>
<rect x="515" y="502" width="1" height="28" fill="#000"/>
<rect x="514" y="510" width="4" height="20" fill="#1a1a1a"/>
<rect x="515" y="511" width="2" height="18" fill="#4fbd4f"/>
<rect x="521" y="456" width="1" height="54" fill="#000"/>
<rect x="520" y="467" width="4" height="39" fill="#1a1a1a"/>
<rect x="521" y="468" width="2" height="37" fill="#4fbd4f"/>
<rect x="526" y="457" width="1" height="26" fill="#000"/>
<rect x="525" y="466" width="4" height="8" fill="#2a0a0a"/>
<rect x="526" y="467" width="2" height="6" fill="#a8302a"/>
<rect x="531" y="450" width="1" height="25" fill="#000"/>
<rect x="530" y="462" width="4" height="11" fill="#1a1a1a"/>
<rect x="531" y="463" width="2" height="9" fill="#4fbd4f"/>
<rect x="537" y="468" width="1" height="17" fill="#000"/>
<rect x="536" y="469" width="4" height="11" fill="#2a0a0a"/>
<rect x="537" y="470" width="2" height="9" fill="#a8302a"/>
<rect x="542" y="440" width="1" height="35" fill="#000"/>
<rect x="541" y="452" width="4" height="23" fill="#1a1a1a"/>
<rect x="542" y="453" width="2" height="21" fill="#4fbd4f"/>
<rect x="547" y="406" width="1" height="42" fill="#000"/>
<rect x="546" y="410" width="4" height="38" fill="#1a1a1a"/>
<rect x="547" y="411" width="2" height="36" fill="#4fbd4f"/>
<rect x="553" y="383" width="1" height="35" fill="#000"/>
<rect x="552" y="396" width="4" height="18" fill="#1a1a1a"/>
<rect x="553" y="397" width="2" height="16" fill="#4fbd4f"/>
<rect x="558" y="383" width="1" height="39" fill="#000"/>
<rect x="557" y="396" width="4" height="17" fill="#2a0a0a"/>
<rect x="558" y="397" width="2" height="15" fill="#a8302a"/>
<rect x="563" y="399" width="1" height="48" fill="#000"/>
<rect x="562" y="412" width="4" height="23" fill="#2a0a0a"/>
<rect x="563" y="413" width="2" height="21" fill="#a8302a"/>
<rect x="568" y="387" width="1" height="48" fill="#000"/>
<rect x="567" y="394" width="4" height="41" fill="#1a1a1a"/>
<rect x="568" y="395" width="2" height="39" fill="#4fbd4f"/>
<rect x="574" y="386" width="1" height="34" fill="#000"/>
<rect x="573" y="395" width="4" height="7" fill="#1a1a1a"/>
<rect x="574" y="396" width="2" height="5" fill="#4fbd4f"/>
<rect x="579" y="365" width="1" height="31" fill="#000"/>
<rect x="578" y="373" width="4" height="15" fill="#1a1a1a"/>
<rect x="579" y="374" width="2" height="13" fill="#4fbd4f"/>
<rect x="584" y="370" width="1" height="32" fill="#000"/>
<rect x="583" y="378" width="4" height="15" fill="#2a0a0a"/>
<rect x="584" y="379" width="2" height="13" fill="#a8302a"/>
<rect x="590" y="381" width="1" height="41" fill="#000"/>
<rect x="589" y="398" width="4" height="20" fill="#2a0a0a"/>
<rect x="590" y="399" width="2" height="18" fill="#a8302a"/>
<rect x="595" y="384" width="1" height="35" fill="#000"/>
<rect x="594" y="399" width="4" height="17" fill="#1a1a1a"/>
<rect x="595" y="400" width="2" height="15" fill="#4fbd4f"/>
<rect x="600" y="373" width="1" height="36" fill="#000"/>
<rect x="599" y="388" width="4" height="7" fill="#2a0a0a"/>
<rect x="600" y="389" width="2" height="5" fill="#a8302a"/>
<rect x="605" y="359" width="1" height="35" fill="#000"/>
<rect x="604" y="383" width="4" height="8" fill="#1a1a1a"/>
<rect x="605" y="384" width="2" height="6" fill="#4fbd4f"/>
<rect x="611" y="326" width="1" height="77" fill="#000"/>
<rect x="610" y="334" width="4" height="50" fill="#1a1a1a"/>
<rect x="611" y="335" width="2" height="48" fill="#4fbd4f"/>
<rect x="616" y="318" width="1" height="35" fill="#000"/>
<rect x="615" y="327" width="4" height="4" fill="#2a0a0a"/>
<rect x="616" y="328" width="2" height="2" fill="#a8302a"/>
<rect x="621" y="317" width="1" height="25" fill="#000"/>
<rect x="620" y="331" width="4" height="3" fill="#2a0a0a"/>
<rect x="621" y="332" width="2" height="1" fill="#a8302a"/>
<rect x="627" y="298" width="1" height="33" fill="#000"/>
<rect x="626" y="322" width="4" height="2" fill="#1a1a1a"/>
<rect x="632" y="315" width="1" height="31" fill="#000"/>
<rect x="631" y="323" width="4" height="5" fill="#1a1a1a"/>
<rect x="632" y="324" width="2" height="3" fill="#4fbd4f"/>
<rect x="637" y="320" width="1" height="26" fill="#000"/>
<rect x="636" y="324" width="4" height="2" fill="#1a1a1a"/>
<rect x="642" y="311" width="1" height="15" fill="#000"/>
<rect x="641" y="316" width="4" height="2" fill="#1a1a1a"/>
<rect x="648" y="267" width="1" height="58" fill="#000"/>
<rect x="647" y="281" width="4" height="39" fill="#1a1a1a"/>
<rect x="648" y="282" width="2" height="37" fill="#4fbd4f"/>
<rect x="653" y="252" width="1" height="33" fill="#000"/>
<rect x="652" y="263" width="4" height="11" fill="#1a1a1a"/>
<rect x="653" y="264" width="2" height="9" fill="#4fbd4f"/>
<rect x="658" y="258" width="1" height="19" fill="#000"/>
<rect x="657" y="264" width="4" height="2" fill="#1a1a1a"/>
<rect x="664" y="265" width="1" height="26" fill="#000"/>
<rect x="663" y="266" width="4" height="13" fill="#2a0a0a"/>
<rect x="664" y="267" width="2" height="11" fill="#a8302a"/>
<rect x="669" y="248" width="1" height="37" fill="#000"/>
<rect x="668" y="263" width="4" height="9" fill="#1a1a1a"/>
<rect x="669" y="264" width="2" height="7" fill="#4fbd4f"/>
<rect x="674" y="267" width="1" height="40" fill="#000"/>
<rect x="673" y="267" width="4" height="21" fill="#2a0a0a"/>
<rect x="674" y="268" width="2" height="19" fill="#a8302a"/>
<rect x="680" y="261" width="1" height="33" fill="#000"/>
<rect x="679" y="269" width="4" height="15" fill="#1a1a1a"/>
<rect x="680" y="270" width="2" height="13" fill="#4fbd4f"/>
<rect x="685" y="257" width="1" height="33" fill="#000"/>
<rect x="684" y="272" width="4" height="2" fill="#1a1a1a"/>
<rect x="690" y="260" width="1" height="28" fill="#000"/>
<rect x="689" y="269" width="4" height="14" fill="#1a1a1a"/>
<rect x="690" y="270" width="2" height="12" fill="#4fbd4f"/>
<rect x="695" y="205" width="1" height="63" fill="#000"/>
<rect x="694" y="213" width="4" height="55" fill="#1a1a1a"/>
<rect x="695" y="214" width="2" height="53" fill="#4fbd4f"/>
<rect x="701" y="212" width="1" height="52" fill="#000"/>
<rect x="700" y="215" width="4" height="37" fill="#2a0a0a"/>
<rect x="701" y="216" width="2" height="35" fill="#a8302a"/>
<rect x="706" y="247" width="1" height="64" fill="#000"/>
<rect x="705" y="251" width="4" height="46" fill="#2a0a0a"/>
<rect x="706" y="252" width="2" height="44" fill="#a8302a"/>
<rect x="711" y="281" width="1" height="47" fill="#000"/>
<rect x="710" y="294" width="4" height="14" fill="#1a1a1a"/>
<rect x="711" y="295" width="2" height="12" fill="#4fbd4f"/>
<rect x="717" y="261" width="1" height="33" fill="#000"/>
<rect x="716" y="269" width="4" height="21" fill="#1a1a1a"/>
<rect x="717" y="270" width="2" height="19" fill="#4fbd4f"/>
<rect x="722" y="271" width="1" height="40" fill="#000"/>
<rect x="721" y="272" width="4" height="33" fill="#2a0a0a"/>
<rect x="722" y="273" width="2" height="31" fill="#a8302a"/>
<rect x="727" y="295" width="1" height="52" fill="#000"/>
<rect x="726" y="308" width="4" height="23" fill="#2a0a0a"/>
<rect x="727" y="309" width="2" height="21" fill="#a8302a"/>
<rect x="732" y="341" width="1" height="50" fill="#000"/>
<rect x="731" y="344" width="4" height="37" fill="#2a0a0a"/>
<rect x="732" y="345" width="2" height="35" fill="#a8302a"/>
<rect x="738" y="365" width="1" height="23" fill="#000"/>
<rect x="737" y="374" width="4" height="4" fill="#1a1a1a"/>
<rect x="738" y="375" width="2" height="2" fill="#4fbd4f"/>
<rect x="743" y="349" width="1" height="30" fill="#000"/>
<rect x="742" y="358" width="4" height="19" fill="#1a1a1a"/>
<rect x="743" y="359" width="2" height="17" fill="#4fbd4f"/>
<rect x="748" y="347" width="1" height="57" fill="#000"/>
<rect x="747" y="347" width="4" height="46" fill="#2a0a0a"/>
<rect x="748" y="348" width="2" height="44" fill="#a8302a"/>
<rect x="754" y="356" width="1" height="41" fill="#000"/>
<rect x="753" y="363" width="4" height="28" fill="#1a1a1a"/>
<rect x="754" y="364" width="2" height="26" fill="#4fbd4f"/>
</svg>
<div class="pl" style="top:543px">91.0000</div>
<div class="pl" style="top:519px">92.0000</div>
<div class="pl" style="top:495px">93.0000</div>
<div class="pl" style="top:471px">94.0000</div>
<div class="pl" style="top:447px">95.0000</div>
<div class="pl" style="top:423px">96.0000</div>
<div class="pl" style="top:398px">97.0000</div>
<div class="pl" style="top:374px">98.0000</div>
<div class="pl" style="top:350px">99.0000</div>
<div class="pl" style="top:326px">100.0000</div>
<div class="pl" style="top:302px">101.0000</div>
<div class="pl" style="top:278px">102.0000</div>
<div class="pl" style="top:254px">103.0000</div>
<div class="pl" style="top:230px">104.0000</div>
<div class="pl" style="top:206px">105.0000</div>
<div class="pl" style="top:182px">106.0000</div>
<div class="pl" style="top:157px">107.0000</div>
<div class="pl" style="top:133px">108.0000</div>
<div class="pl" style="top:109px">109.0000</div>
<div class="pl" style="top:85px">110.0000</div>
<div class="a" style="left:841px;top:357px;width:51px;height:13px;background:#fff;border:1px solid #c03838"></div>
<div class="pl" style="top:358px;color:#141460">98.6600</div>
<div class="dl" style="left:29px">09</div>
<div class="dl" style="left:56px">16</div>
<div class="dl" style="left:82px">23</div>
<div class="dl" style="left:109px">30</div>
<div class="dl" style="left:135px">07</div>
<div class="dl" style="left:162px">14</div>
<div class="dl" style="left:188px">21</div>
<div class="dl" style="left:215px">28</div>
<div class="dl" style="left:241px">04</div>
<div class="dl" style="left:268px">11</div>
<div class="dl" style="left:294px">18</div>
<div class="dl" style="left:321px">25</div>
<div class="dl" style="left:347px">02</div>
<div class="dl" style="left:373px">09</div>
<div class="dl" style="left:400px">16</div>
<div class="dl" style="left:426px">23</div>
<div class="dl" style="left:448px">30</div>
<div class="dl" style="left:469px">06</div>
<div class="dl" style="left:495px">13</div>
<div class="dl" style="left:522px">20</div>
<div class="dl" style="left:548px">27</div>
<div class="dl" style="left:575px">03</div>
<div class="dl" style="left:601px">10</div>
<div class="dl" style="left:627px">17</div>
<div class="dl" style="left:654px">24</div>
<div class="dl" style="left:680px">03</div>
<div class="dl" style="left:707px">10</div>
<div class="dl" style="left:733px">17</div>
<div class="dl" style="left:763px">24</div>
<div class="dl" style="left:790px">31</div>
<div class="ml" style="left:44px;width:80px;margin-left:-40px;text-align:center">Sep/09/13</div>
<div class="ml" style="left:150px;width:80px;margin-left:-40px;text-align:center">Oct/07</div>
<div class="ml" style="left:256px;width:80px;margin-left:-40px;text-align:center">Nov/04</div>
<div class="ml" style="left:362px;width:80px;margin-left:-40px;text-align:center">Dec/02</div>
<div class="ml" style="left:484px;width:80px;margin-left:-40px;text-align:center">Jan/06/14</div>
<div class="ml" style="left:590px;width:80px;margin-left:-40px;text-align:center">Feb/03</div>
<div class="ml" style="left:695px;width:80px;margin-left:-40px;text-align:center">Mar/03</div>
<div class="a" style="left:8px;top:616px;width:890px;height:2px;background:#f7f7f7"></div>
<div class="a" style="left:12px;top:599px;width:12px;height:12px;background:#3a69a8;border:1px solid #27497e"></div>
<div class="a" style="left:26px;top:596px;width:1px;height:19px;background:#6e6e6e"></div>
<div class="a" style="left:30px;top:594px;width:150px;height:22px;background:#fcfcfc;border:1px solid #a8a8a8"></div>
<svg class="a" style="left:30px;top:594px" width="30" height="22"><circle cx="10.2" cy="8.3" r="3.1" fill="none" stroke="#3a3a3a" stroke-width="1.2"/><line x1="7.9" y1="10.6" x2="4" y2="14.2" stroke="#2a2a2a" stroke-width="1.6"/><rect x="10" y="15" width="1.2" height="1.2" fill="#222"/><rect x="12" y="15" width="1.2" height="1.2" fill="#222"/><rect x="14" y="15" width="1.2" height="1.2" fill="#222"/></svg>
<div class="a" style="left:51px;top:599px;font:11px 'Liberation Sans',sans-serif;color:#6d6d6d;white-space:nowrap">Search for instrument</div>
<div class="a" style="left:198px;top:596px;width:1px;height:19px;background:#6e6e6e"></div>
<div class="a" style="left:202px;top:599px;font:bold 12px 'Liberation Sans',sans-serif;color:#111;white-space:nowrap">17 Mar 2014 20:00:00 EDT</div>
</body></html>
